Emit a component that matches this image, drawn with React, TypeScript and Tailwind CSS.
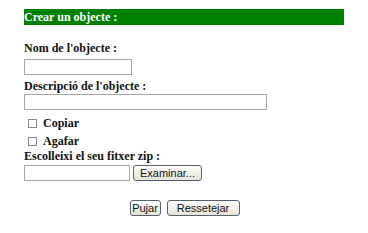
import React from "react";

const serif = { fontFamily: '"Liberation Serif", "Times New Roman", serif' };
const sans = { fontFamily: '"Liberation Sans", Tahoma, Arial, sans-serif' };

function Check({ label, cls }: { label: string; cls: string }) {
  return (
    <div className={`flex items-center h-[16px] ${cls}`}>
      <span className="ml-[4px] w-[9px] h-[9px] shrink-0 border border-[#8a8a8a] bg-white" />
      <span className="ml-[6px] text-[12px] leading-[16px] font-bold text-[#111]">{label}</span>
    </div>
  );
}

function Btn({ children, w }: { children: React.ReactNode; w: string }) {
  return (
    <button
      type="button"
      style={sans}
      className={`${w} h-[16px] flex items-center justify-center rounded-[3px] border border-[#54606e] bg-gradient-to-b from-white to-[#e6e3d6] text-[11px] leading-[14px] text-[#111]`}
    >
      {children}
    </button>
  );
}

export default function App() {
  return (
    <div className="w-[368px] h-[233px] bg-white" style={serif}>
      <div className="pl-[24px] pt-[9px] flex flex-col">
        <div className="w-[320px] h-[16px] bg-[#008000] text-white font-bold text-[12px] leading-[16px]">
          Crear un objecte :
        </div>
        <div className="mt-[16px] text-[12px] leading-[15px] font-bold text-[#111]">Nom de l'objecte :</div>
        <div className="mt-[3px] w-[108px] h-[16px] border border-[#a7a7a7] bg-white" />
        <div className="mt-[4px] text-[12px] leading-[15px] font-bold text-[#111]">Descripció de l'objecte :</div>
        <div className="w-[243px] h-[16px] border border-[#a7a7a7] bg-white" />
        <Check label="Copiar" cls="mt-[5px]" />
        <Check label="Agafar" cls="mt-[2px]" />
        <div className="text-[12px] leading-[15px] font-bold text-[#111]">Escolleixi el seu fitxer zip :</div>
        <div className="mt-[1px] flex items-center gap-[3px]">
          <div className="w-[106px] h-[16px] border border-[#a7a7a7] bg-white" />
          <Btn w="w-[69px]">Examinar...</Btn>
        </div>
      </div>
      <div className="mt-[19px] flex justify-center gap-[6px] pl-[1px]">
        <Btn w="w-[31px]">Pujar</Btn>
        <Btn w="w-[73px]">Ressetejar</Btn>
      </div>
    </div>
  );
}
